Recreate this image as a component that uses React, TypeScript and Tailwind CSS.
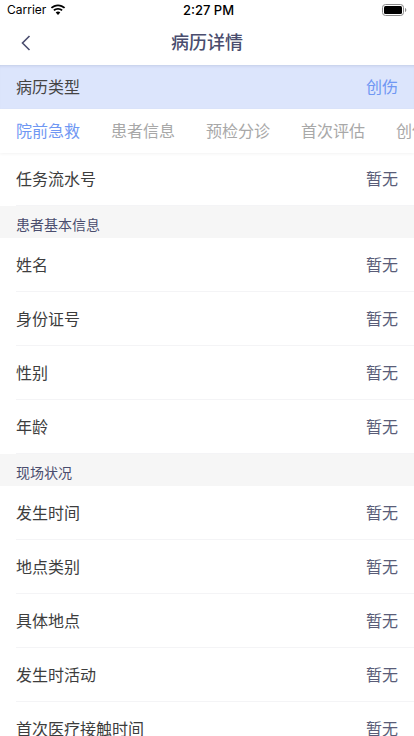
import React from "react";

const font = { fontFamily: '"Noto Sans CJK SC", Inter, sans-serif' };

function Row({ label, h = "h-[54px]" }: { label: string; h?: string }) {
  return (
    <div className={`${h} shrink-0 ml-4 pr-4 pb-[2px] flex items-center justify-between border-b border-[#f4f4f6] text-[16px] leading-none`}>
      <span className="text-[#3d3d3d]">{label}</span>
      <span className="text-[#5a5d78]">暂无</span>
    </div>
  );
}

function Section({ title }: { title: string }) {
  return (
    <div className="h-8 shrink-0 bg-[#f6f6f6] px-4 pt-[3px] flex items-center text-[14px] leading-none text-[#4a4d6e]">{title}</div>
  );
}

export default function App() {
  return (
    <div className="w-[414px] h-[736px] overflow-hidden bg-white flex flex-col" style={font}>
      <div className="h-5 shrink-0 flex items-center justify-between px-[7px] text-[12px] font-medium text-black relative" style={{ fontFamily: "Inter, sans-serif" }}>
        <div className="flex items-center gap-1">
          <span className="font-normal">Carrier</span>
          <svg width="16" height="12" viewBox="0 0 16 12" fill="#000">
            <path d="M8 2.2c2.3 0 4.4.9 6 2.4l1.2-1.3C13.300 1.500 10.800.4 8 .4S2.700 1.500.8 3.300L2 4.600c1.600-1.500 3.700-2.400 6-2.400z" />
            <path d="M8 5.700c1.300 0 2.500.5 3.500 1.400l1.200-1.300C11.400 4.600 9.800 3.900 8 3.900s-3.400.7-4.700 1.900l1.200 1.300c1-.9 2.200-1.400 3.500-1.400z" />
            <path d="M8 7.500c-.9 0-1.700.3-2.300.9L8 11l2.300-2.600c-.6-.6-1.400-.9-2.300-.9z" />
          </svg>
        </div>
        <span className="absolute left-[183px] top-[1px] text-[13px]">2:27 PM</span>
        <svg width="25" height="12" viewBox="0 0 25 12">
          <rect x="0.500" y="0.500" width="21" height="11" rx="3" fill="none" stroke="#8a8a8a" />
          <rect x="2" y="2" width="18" height="8" rx="1.500" fill="#000" />
          <path d="M23 4v4c.8-.3 1.300-1.100 1.300-2S23.800 4.300 23 4z" fill="#8a8a8a" />
        </svg>
      </div>
      <div className="h-[45px] shrink-0 relative flex items-center justify-center pb-[3px] text-[18px] leading-none font-medium text-[#4a4d6e]">
        <svg className="absolute left-[20px] top-[14px]" width="12" height="18" viewBox="0 0 12 18" fill="none" stroke="#4a4d6e" strokeWidth="1.600">
          <path d="M9.500 2 2.500 9l7 7" />
        </svg>
        <span>病历详情</span>
      </div>
      <div className="h-[44px] shrink-0 bg-[#dce5fc] shadow-[inset_0_3px_3px_-2px_rgba(120,130,170,0.25)] px-4 pb-[2px] flex items-center justify-between text-[16px] leading-none">
        <span className="text-[#444444]">病历类型</span>
        <span className="text-[#6f97f3]">创伤</span>
      </div>
      <div className="h-[44px] shrink-0 flex items-center pl-4 pb-[2px] gap-[31px] whitespace-nowrap overflow-hidden text-[16px] leading-none text-[#a8a8a8] shadow-[0_1px_3px_rgba(0,0,0,0.05)] relative">
        <span className="text-[#6f97f3]">院前急救</span>
        <span>患者信息</span>
        <span>预检分诊</span>
        <span>首次评估</span>
        <span>创伤评分</span>
      </div>
      <Row label="任务流水号" h="h-[53px]" />
      <Section title="患者基本信息" />
      <Row label="姓名" />
      <Row label="身份证号" />
      <Row label="性别" />
      <Row label="年龄" />
      <Section title="现场状况" />
      <Row label="发生时间" />
      <Row label="地点类别" />
      <Row label="具体地点" />
      <Row label="发生时活动" />
      <Row label="首次医疗接触时间" />
    </div>
  );
}
